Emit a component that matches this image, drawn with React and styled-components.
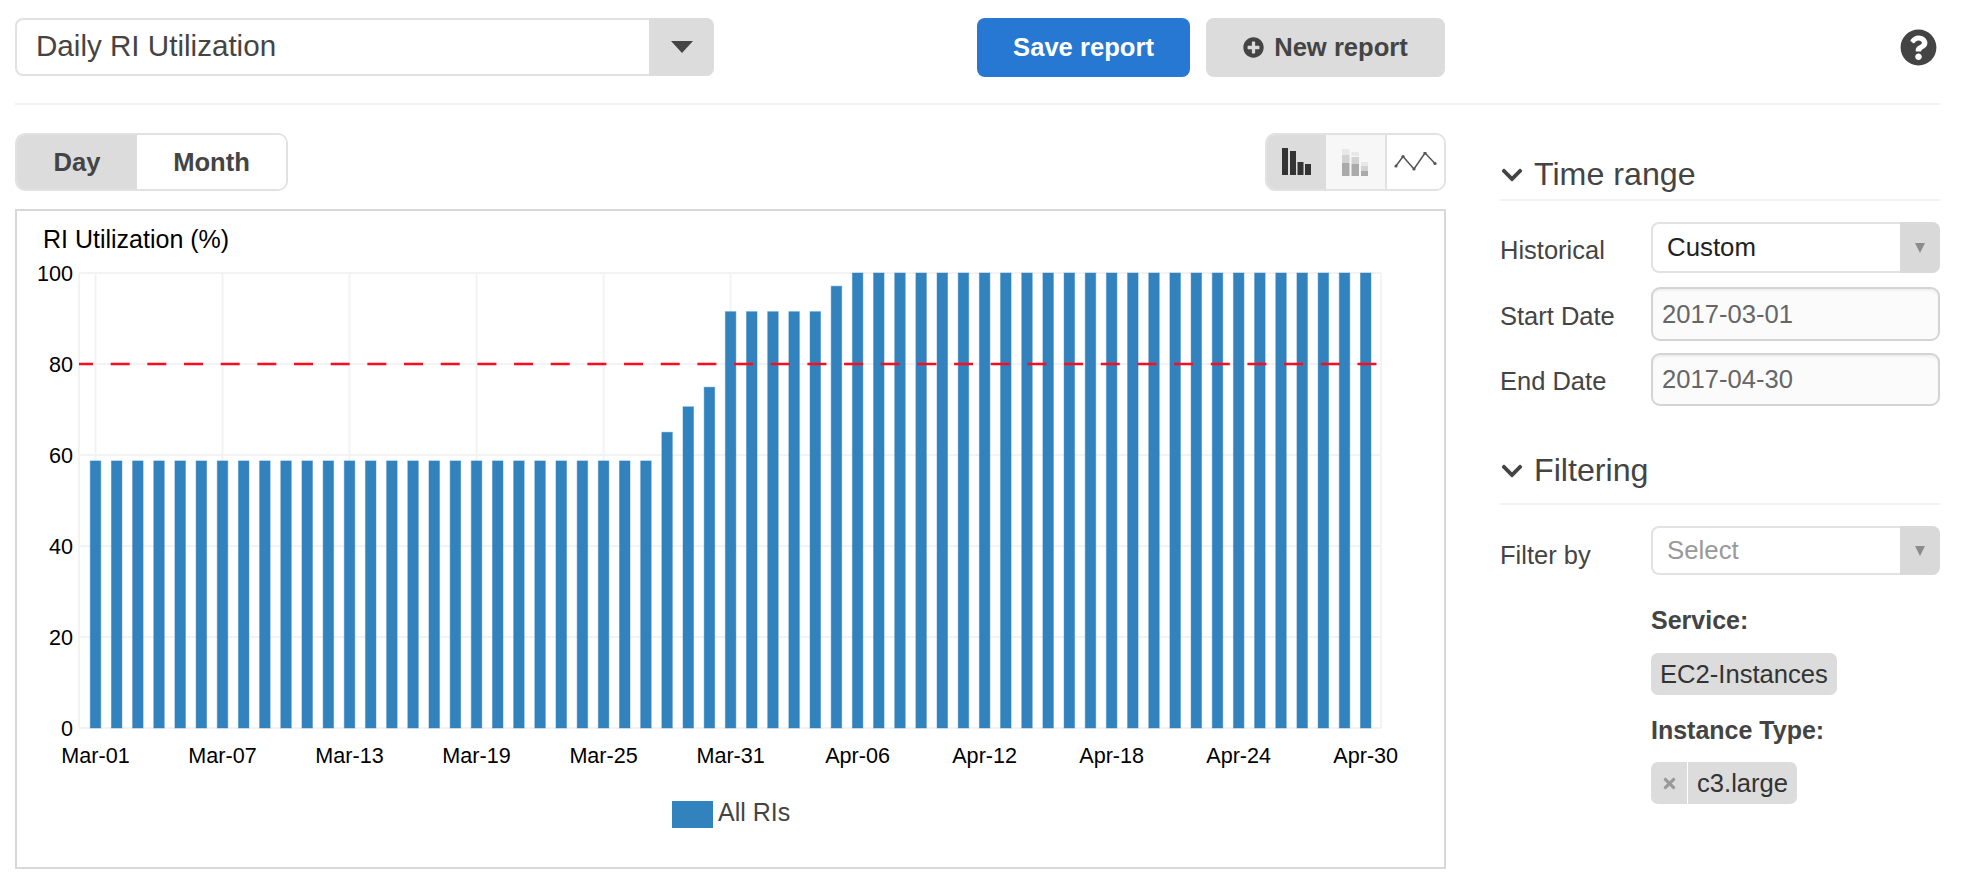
// App.jsx
import React from 'react';
import styled, { createGlobalStyle } from 'styled-components';
import { FaChevronDown, FaPlusCircle, FaQuestionCircle, FaTimes } from 'react-icons/fa';

const GlobalStyle = createGlobalStyle`
  html, body {
    margin: 0;
    padding: 0;
    background: #fff;
    font-family: "Liberation Sans", Arial, sans-serif;
    color: #444;
  }
  * { box-sizing: border-box; }
`;

const Page = styled.div`
  width: 1978px;
  height: 888px;
  padding: 18px 38px 0 15px;
  overflow: hidden;
`;

const Toolbar = styled.header`
  display: flex;
  align-items: flex-start;
  height: 87px;
  border-bottom: 2px solid #f3f3f3;
`;

const ReportSelect = styled.div`
  width: 699px;
  height: 58px;
  margin-right: 263px;
  display: flex;
  justify-content: space-between;
  border: 2px solid #e2e2e2;
  border-right: 0;
  border-radius: 8px;
  font-size: 29.6px;
  color: #444;
`;

const ReportName = styled.span`
  padding-left: 19px;
  line-height: 52px;
`;

const ReportCaret = styled.span`
  width: 65px;
  height: 58px;
  margin-top: -2px;
  display: flex;
  align-items: center;
  justify-content: center;
  background: #dcdcdc;
  border-radius: 0 8px 8px 0;
`;

const Triangle = styled.i`
  display: block;
  width: 0;
  height: 0;
  border-left: ${(p) => p.$size}px solid transparent;
  border-right: ${(p) => p.$size}px solid transparent;
  border-top: ${(p) => p.$tall}px solid ${(p) => p.$color};
`;

const ActionButton = styled.button`
  height: 59px;
  width: ${(p) => p.$width}px;
  margin-right: 16px;
  padding: 0;
  display: flex;
  align-items: center;
  justify-content: center;
  gap: 10px;
  border: 0;
  border-radius: 8px;
  font-family: inherit;
  font-size: 25.6px;
  font-weight: 700;
  background: ${(p) => (p.$primary ? '#2678d2' : '#dcdcdc')};
  color: ${(p) => (p.$primary ? '#fff' : '#444')};
`;

const HelpIcon = styled(FaQuestionCircle)`
  margin: 11px 3px 0 auto;
  font-size: 37px;
  color: #444;
`;

const Main = styled.main`
  display: flex;
  gap: 54px;
  margin-top: 28px;
`;

const ChartColumn = styled.section`
  width: 1431px;
`;

const ChartControls = styled.div`
  display: flex;
  justify-content: space-between;
  margin-bottom: 18px;
`;

const Segmented = styled.div`
  display: flex;
  height: 58px;
  border: 2px solid #e2e2e2;
  border-radius: 10px;
  overflow: hidden;
`;

const PeriodTab = styled.span`
  width: ${(p) => p.$width}px;
  margin: -2px 0;
  display: flex;
  align-items: center;
  justify-content: center;
  font-size: 25.6px;
  font-weight: 700;
  color: #444;
  background: ${(p) => (p.$active ? '#dcdcdc' : '#fff')};
`;

const ChartTypeTab = styled.span`
  width: 59px;
  margin: -2px 0;
  display: flex;
  align-items: center;
  justify-content: center;
  background: ${(p) => p.$bg};
  border-left: ${(p) => (p.$divided ? '2px solid #e2e2e2' : '0')};
`;

const ChartBox = styled.div`
  height: 660px;
  border: 2px solid #d8d8d8;
`;

const ChartSvg = styled.svg`
  display: block;
  font-family: "Liberation Sans", Arial, sans-serif;
`;

const Sidebar = styled.aside`
  width: 440px;
`;

const SectionHeader = styled.h3`
  margin: ${(p) => p.$top}px 0 21px;
  height: ${(p) => p.$height}px;
  display: flex;
  align-items: flex-start;
  gap: 10px;
  border-bottom: 2px solid #f3f3f3;
  font-size: 32.2px;
  line-height: 40px;
  font-weight: 400;
  color: #444;
`;

const HeaderChevron = styled(FaChevronDown)`
  width: 24px;
  height: 24px;
  margin-top: 9px;
  color: #444;
`;

const FormRow = styled.div`
  display: grid;
  grid-template-columns: 151px 289px;
  align-items: center;
  margin-bottom: ${(p) => p.$gap}px;
`;

const FieldLabel = styled.label`
  padding-top: ${(p) => p.$drop}px;
  font-size: 25.5px;
  color: #444;
`;

const SelectBox = styled.div`
  height: ${(p) => p.$height}px;
  display: flex;
  justify-content: space-between;
  border: 2px solid #e2e2e2;
  border-right: 0;
  border-radius: 8px;
  font-size: 25.8px;
  color: ${(p) => p.$color};
`;

const SelectText = styled.span`
  align-self: center;
  padding-left: 14px;
`;

const SelectCaret = styled.span`
  width: 40px;
  margin: -2px 0;
  display: flex;
  align-items: center;
  justify-content: center;
  background: #d9d9d9;
  border-radius: 0 8px 8px 0;
`;

const DateInput = styled.div`
  height: ${(p) => p.$height}px;
  padding-left: 9px;
  display: flex;
  align-items: center;
  background: #fbfbfb;
  border: 2px solid #d4d4d4;
  border-radius: 9px;
  box-shadow: inset 0 2px 2px rgba(0, 0, 0, 0.05);
  font-size: 25.6px;
  color: #666;
`;

const FilterValues = styled.div`
  margin: 30px 0 0 151px;
`;

const FilterTitle = styled.div`
  margin-bottom: ${(p) => p.$gap}px;
  font-size: 25px;
  line-height: 30px;
  font-weight: 700;
  color: #444;
`;

const Chip = styled.div`
  display: inline-flex;
  height: 42px;
  margin-bottom: ${(p) => p.$gap}px;
  background: #dcdcdc;
  border-radius: 7px;
  overflow: hidden;
  font-size: 25.6px;
  line-height: 42px;
  color: #333;
`;

const ChipRemove = styled.span`
  width: 37px;
  display: flex;
  align-items: center;
  justify-content: center;
  border-right: 1px solid #fff;
  color: #999;
  font-size: 17px;
`;

const ChipText = styled.span`
  padding: 0 9px;
`;

const PLOT = { left: 79, right: 1381, top: 274, bottom: 729 };
const FIRST_BAR = 95.5;
const BAR_STEP = 21.17;
const BLUE = '#3182bd';

const utilization = Array.from({ length: 61 }, (_, i) => {
  if (i < 27) return 58.7;
  if (i === 27) return 65;
  if (i === 28) return 70.6;
  if (i === 29) return 74.9;
  if (i < 35) return 91.5;
  if (i === 35) return 97.1;
  return 100;
});

const dateLabels = [
  'Mar-01', 'Mar-07', 'Mar-13', 'Mar-19', 'Mar-25', 'Mar-31',
  'Apr-06', 'Apr-12', 'Apr-18', 'Apr-24', 'Apr-30',
];

const yFor = (value) => PLOT.bottom - (value / 100) * (PLOT.bottom - PLOT.top);

const UtilizationChart = () => (
  <ChartSvg width="1427" height="656" viewBox="17 212 1427 656">
    <text x="43" y="240" fontSize="25" fill="#000" dominantBaseline="central">RI Utilization (%)</text>

    <line x1={PLOT.left} x2={PLOT.left} y1={PLOT.top} y2={PLOT.bottom} stroke="#f3f3f3" strokeWidth="2" />
    <line x1={PLOT.right} x2={PLOT.right} y1={PLOT.top} y2={PLOT.bottom} stroke="#f3f3f3" strokeWidth="2" />
    {dateLabels.map((label, i) => (
      <line
        key={label}
        x1={FIRST_BAR + i * 6 * BAR_STEP}
        x2={FIRST_BAR + i * 6 * BAR_STEP}
        y1={PLOT.top}
        y2={PLOT.bottom}
        stroke="#f3f3f3"
        strokeWidth="2"
      />
    ))}
    {[0, 20, 40, 60, 80, 100].map((tick) => (
      <g key={tick}>
        <line x1={PLOT.left} x2={PLOT.right} y1={yFor(tick)} y2={yFor(tick)} stroke="#f3f3f3" strokeWidth="2" />
        <text x="73" y={yFor(tick)} fontSize="21.6" fill="#000" textAnchor="end" dominantBaseline="central">{tick}</text>
      </g>
    ))}

    {utilization.map((value, i) => (
      <rect
        key={i}
        x={FIRST_BAR + i * BAR_STEP - 5.25}
        y={yFor(value)}
        width="10.5"
        height={PLOT.bottom - yFor(value)}
        fill={BLUE}
        stroke={BLUE}
        strokeOpacity="0.45"
      />
    ))}

    <line
      x1={PLOT.left}
      x2={PLOT.right}
      y1={yFor(80)}
      y2={yFor(80)}
      stroke="#ff0a1e"
      strokeWidth="2.6"
      strokeDasharray="19 17.67"
      strokeDashoffset="5"
    />

    {dateLabels.map((label, i) => (
      <text key={label} x={FIRST_BAR + i * 6 * BAR_STEP} y="756" fontSize="21.6" fill="#000" textAnchor="middle" dominantBaseline="central">
        {label}
      </text>
    ))}

    <rect x="672" y="802" width="41" height="27" fill={BLUE} />
    <text x="718" y="813" fontSize="25" fill="#444" dominantBaseline="central">All RIs</text>
  </ChartSvg>
);

const BarsIcon = () => (
  <svg width="30" height="28" viewBox="0 0 30 28">
    <rect x="0" y="0" width="6" height="27" fill="#333" />
    <rect x="8" y="3" width="6" height="24" fill="#333" />
    <rect x="15.5" y="14" width="6" height="13" fill="#333" />
    <rect x="23" y="16" width="6" height="11" fill="#333" />
  </svg>
);

const StackedIcon = () => (
  <svg width="27" height="27" viewBox="0 0 27 27">
    <rect x="0" y="0" width="7.5" height="6" fill="#e8e8e8" />
    <rect x="0" y="6" width="7.5" height="8" fill="#d2d2d2" />
    <rect x="0" y="14" width="7.5" height="13" fill="#aaa" />
    <rect x="9.5" y="3" width="7.5" height="4" fill="#e8e8e8" />
    <rect x="9.5" y="8" width="7.5" height="7" fill="#d2d2d2" />
    <rect x="9.5" y="15" width="7.5" height="12" fill="#aaa" />
    <rect x="19" y="13" width="7" height="4" fill="#e8e8e8" />
    <rect x="19" y="17" width="7" height="5" fill="#d2d2d2" />
    <rect x="19" y="22" width="7" height="5" fill="#aaa" />
  </svg>
);

const LineIcon = () => (
  <svg width="44" height="20" viewBox="0 0 44 20">
    <polyline points="2,14 9,4.5 20,17 31,1 41,11.5" fill="none" stroke="#555" strokeWidth="1.5" />
    {[[2, 14], [9, 4.5], [20, 17], [31, 1], [41, 11.5]].map(([cx, cy]) => (
      <circle key={cx} cx={cx} cy={cy} r="1.6" fill="#555" />
    ))}
  </svg>
);

const App = () => (
  <Page>
    <GlobalStyle />
    <Toolbar>
      <ReportSelect>
        <ReportName>Daily RI Utilization</ReportName>
        <ReportCaret>
          <Triangle $size={11} $tall={12} $color="#444" />
        </ReportCaret>
      </ReportSelect>
      <ActionButton $primary $width={213}>Save report</ActionButton>
      <ActionButton $width={239}>
        <FaPlusCircle size={21} />
        New report
      </ActionButton>
      <HelpIcon />
    </Toolbar>

    <Main>
      <ChartColumn>
        <ChartControls>
          <Segmented>
            <PeriodTab $active $width={120}>Day</PeriodTab>
            <PeriodTab $width={149}>Month</PeriodTab>
          </Segmented>
          <Segmented>
            <ChartTypeTab $bg="#dcdcdc"><BarsIcon /></ChartTypeTab>
            <ChartTypeTab $bg="#f7f7f7"><StackedIcon /></ChartTypeTab>
            <ChartTypeTab $bg="#fff" $divided><LineIcon /></ChartTypeTab>
          </Segmented>
        </ChartControls>
        <ChartBox>
          <UtilizationChart />
        </ChartBox>
      </ChartColumn>

      <Sidebar>
        <SectionHeader $top={21} $height={47}>
          <HeaderChevron />
          Time range
        </SectionHeader>
        <FormRow $gap={14}>
          <FieldLabel $drop={5}>Historical</FieldLabel>
          <SelectBox $height={51} $color="#222">
            <SelectText>Custom</SelectText>
            <SelectCaret><Triangle $size={5.5} $tall={10} $color="#8c8c8c" /></SelectCaret>
          </SelectBox>
        </FormRow>
        <FormRow $gap={12}>
          <FieldLabel $drop={4}>Start Date</FieldLabel>
          <DateInput $height={54}>2017-03-01</DateInput>
        </FormRow>
        <FormRow $gap={44}>
          <FieldLabel $drop={3}>End Date</FieldLabel>
          <DateInput $height={53}>2017-04-30</DateInput>
        </FormRow>

        <SectionHeader $top={0} $height={55}>
          <HeaderChevron />
          Filtering
        </SectionHeader>
        <FormRow $gap={0}>
          <FieldLabel $drop={9}>Filter by</FieldLabel>
          <SelectBox $height={49} $color="#999">
            <SelectText>Select</SelectText>
            <SelectCaret><Triangle $size={5.5} $tall={10} $color="#8c8c8c" /></SelectCaret>
          </SelectBox>
        </FormRow>

        <FilterValues>
          <FilterTitle $gap={18}>Service:</FilterTitle>
          <Chip $gap={20}>
            <ChipText>EC2-Instances</ChipText>
          </Chip>
          <FilterTitle $gap={17}>Instance Type:</FilterTitle>
          <Chip $gap={0}>
            <ChipRemove><FaTimes /></ChipRemove>
            <ChipText>c3.large</ChipText>
          </Chip>
        </FilterValues>
      </Sidebar>
    </Main>
  </Page>
);

export default App;
